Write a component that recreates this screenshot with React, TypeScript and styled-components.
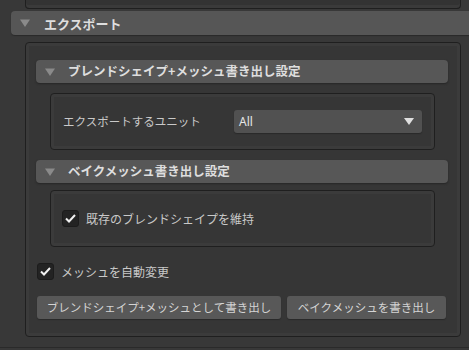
import React from "react";
import styled, { createGlobalStyle } from "styled-components";

const GlobalStyle = createGlobalStyle`
  html, body {
    margin: 0;
    padding: 0;
    background: #383838;
  }
  body {
    font-family: "Noto Sans CJK JP", "Noto Sans", "Liberation Sans", sans-serif;
  }
`;

const Page = styled.div`
  width: 469px;
  height: 350px;
  overflow: hidden;
  background: #383838;
  display: flex;
  flex-direction: column;
`;

const TopBox = styled.div`
  margin-left: 25px;
  width: 434px;
  height: 8px;
  border: 1px solid #1f1f1f;
  border-top: none;
  border-radius: 0 0 4px 4px;
  background: #333333;
  box-shadow: inset 0 -3px 0 #3a3a3a;
`;

const MainHeader = styled.div`
  margin-top: 2px;
  margin-left: 11px;
  width: 470px;
  height: 24px;
  background: #565656;
  border-radius: 4px 0 0 4px;
  display: flex;
  align-items: center;
  box-shadow: 0 1px 1px #2a2a2a;
`;

const Arrow = styled.svg<{ left: number }>`
  margin-left: ${(p) => p.left}px;
  flex-shrink: 0;
`;

const HeaderTitle = styled.span<{ gap: number; size: number }>`
  margin-left: ${(p) => p.gap}px;
  font-size: ${(p) => p.size}px;
  font-weight: bold;
  color: #dedede;
  line-height: 1;
  white-space: nowrap;
`;

const Box = styled.div`
  border: 1px solid #1f1f1f;
  border-radius: 4px;
  padding: 3px;
  background: #3b3b3b;
  display: flex;
`;

const BoxInner = styled.div`
  flex: 1;
  background: #363636;
  display: flex;
  flex-direction: column;
`;

const ContentBox = styled(Box)`
  margin-top: 7px;
  margin-left: 25px;
  width: 428px;
  height: 287px;
`;

const ContentInner = styled(BoxInner)`
  padding: 14px 9px 0 7px;
`;

const SubHeader = styled.div<{ top?: number }>`
  margin-top: ${(p) => p.top ?? 0}px;
  height: 23px;
  background: #575757;
  border-radius: 4px;
  display: flex;
  align-items: center;
  box-shadow: 0 1px 2px #262626;
`;

const InnerBox = styled(Box)<{ top: number }>`
  margin-top: ${(p) => p.top}px;
  margin-left: 14px;
  margin-right: 13px;
  height: 49px;
`;

const InnerPad = styled(BoxInner)`
  flex-direction: row;
  align-items: center;
  padding: 0 9px 0 8px;
`;

const Label = styled.span<{ size?: number }>`
  font-size: ${(p) => p.size ?? 12}px;
  color: #c9c9c9;
  white-space: nowrap;
  line-height: 1;
`;

const UnitLabel = styled(Label)`
  margin-left: 1px;
  width: 171px;
`;

const Select = styled.div`
  flex: 1;
  height: 23px;
  background: #515151;
  border-radius: 3px;
  display: flex;
  align-items: center;
  justify-content: space-between;
  padding: 0 8px 0 5px;
  box-sizing: border-box;
  box-shadow: 0 1px 1px #2a2a2a;
`;

const SelectValue = styled.span`
  font-size: 12px;
  color: #e6e6e6;
  font-family: "Noto Sans", "Liberation Sans", sans-serif;
  line-height: 1;
`;

const CheckRow = styled.label<{ indent?: number; top?: number }>`
  display: flex;
  align-items: center;
  gap: 7px;
  margin-left: ${(p) => p.indent ?? 0}px;
  margin-top: ${(p) => p.top ?? 0}px;
`;

const CheckBox = styled.span`
  width: 15px;
  height: 15px;
  background: #232323;
  border: 1px solid #1c1c1c;
  border-radius: 3px;
  display: flex;
  align-items: center;
  justify-content: center;
  flex-shrink: 0;
`;

const ButtonRow = styled.div`
  display: flex;
  gap: 6px;
  margin-top: 16px;
  margin-left: 1px;
  margin-right: 2px;
`;

const Button = styled.button<{ grow?: boolean }>`
  height: 23px;
  ${(p) => (p.grow ? "width: 244px;" : "flex: 1;")}
  background: #585858;
  border: none;
  border-radius: 3px;
  padding: 0;
  font-family: inherit;
  font-size: 11.5px;
  color: #d4d4d4;
  line-height: 1;
  white-space: nowrap;
  box-shadow: 0 1px 1px #2a2a2a;
`;

const BottomRule = styled.div`
  margin-top: 10px;
  height: 1px;
  background: #2a2a2a;
`;

const Triangle = ({ left, color = "#8a8a8a" }: { left: number; color?: string }) => (
  <Arrow left={left} width="10" height="8" viewBox="0 0 10 8">
    <polygon points="0,0.5 10,0.5 5,8" fill={color} />
  </Arrow>
);

const Check = () => (
  <svg width="11" height="9" viewBox="0 0 11 9">
    <polyline points="1,4.5 4,7.5 10,1" fill="none" stroke="#f0f0f0" strokeWidth="2" />
  </svg>
);

const App = () => {
  return (
    <Page>
      <GlobalStyle />
      <TopBox />
      <MainHeader>
        <Triangle left={9} />
        <HeaderTitle gap={14} size={13}>
          エクスポート
        </HeaderTitle>
      </MainHeader>
      <ContentBox>
        <ContentInner>
          <SubHeader>
            <Triangle left={9} />
            <HeaderTitle gap={13} size={12.5}>
              ブレンドシェイプ+メッシュ書き出し設定
            </HeaderTitle>
          </SubHeader>
          <InnerBox top={10}>
            <InnerPad>
              <UnitLabel size={11.5}>エクスポートするユニット</UnitLabel>
              <Select>
                <SelectValue>All</SelectValue>
                <svg width="10" height="7" viewBox="0 0 10 7">
                  <polygon points="0,0 10,0 5,7" fill="#e0e0e0" />
                </svg>
              </Select>
            </InnerPad>
          </InnerBox>
          <SubHeader top={10}>
            <Triangle left={9} />
            <HeaderTitle gap={13} size={12.5}>
              ベイクメッシュ書き出し設定
            </HeaderTitle>
          </SubHeader>
          <InnerBox top={7}>
            <InnerPad>
              <CheckRow>
                <CheckBox>
                  <Check />
                </CheckBox>
                <Label>既存のブレンドシェイプを維持</Label>
              </CheckRow>
            </InnerPad>
          </InnerBox>
          <CheckRow indent={1} top={16}>
            <CheckBox>
              <Check />
            </CheckBox>
            <Label>メッシュを自動変更</Label>
          </CheckRow>
          <ButtonRow>
            <Button grow>ブレンドシェイプ+メッシュとして書き出し</Button>
            <Button>ベイクメッシュを書き出し</Button>
          </ButtonRow>
        </ContentInner>
      </ContentBox>
      <BottomRule />
    </Page>
  );
};

export default App;
